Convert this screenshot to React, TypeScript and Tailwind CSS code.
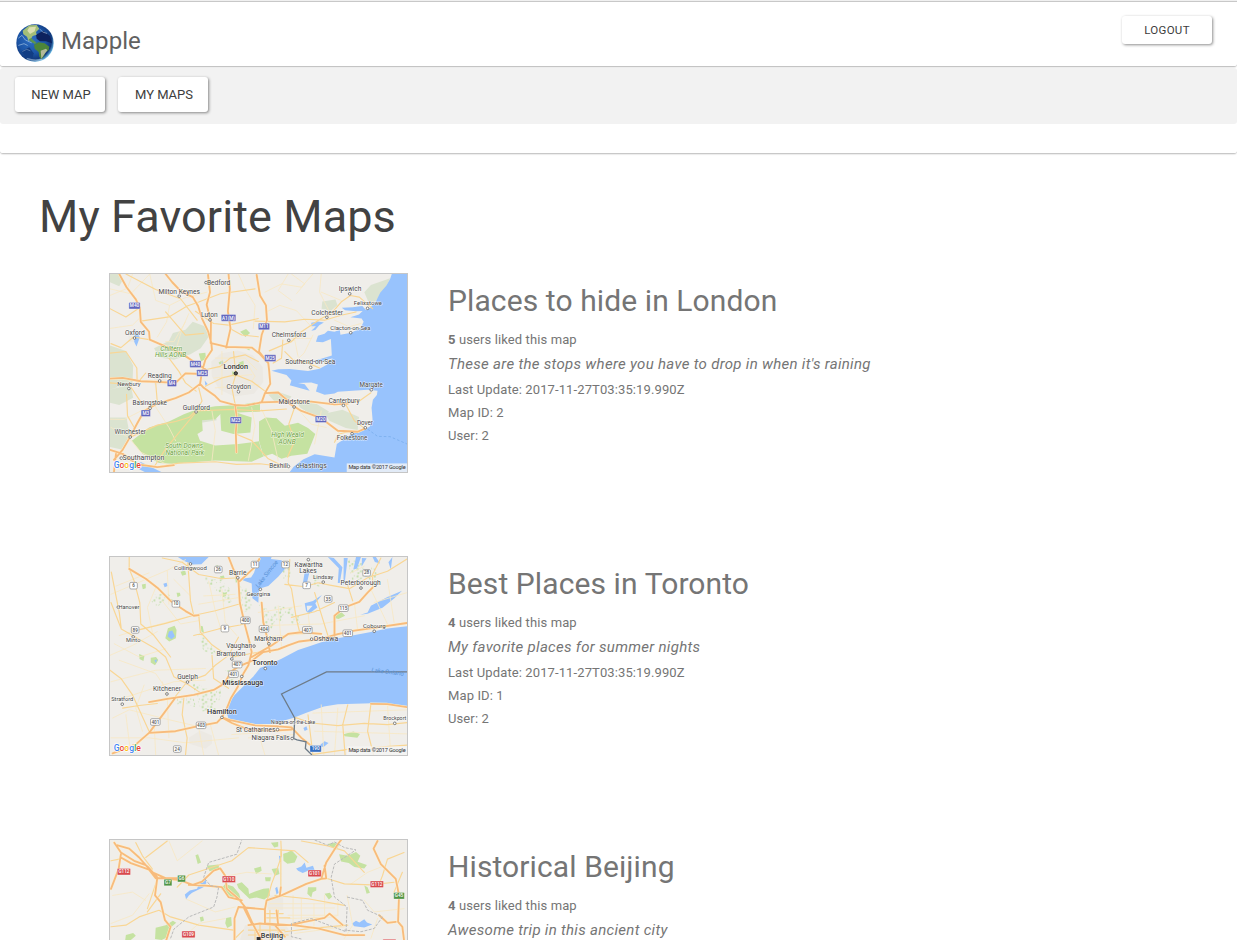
import React from "react";

type Label = [x: number, y: number, text: string, size?: number, color?: string];
type Dot = [x: number, y: number];
type Shield = [x: number, y: number, text: string, fill: string, w?: number];

interface MapArt {
  viewBox: string;
  water: string[];
  parks: string[];
  woods: string[];
  speckledWoods?: boolean;
  towns?: string[];
  motorways: string[];
  major: string[];
  minor: string[];
  borders: { d: string; dash?: string; color: string; width: number }[];
  shields: Shield[];
  dots: Dot[];
  labels: Label[];
  credit?: [number, number];
}

const BLUE = "#6065bd";
const WHITE = "#ffffff";
const RED = "#d8494e";
const GREEN = "#4f9445";

const london: MapArt = {
  viewBox: "12 15 897 600",
  water: [
    "M863 15L858 30L847 50L828 72L815 98L797 118L785 124L774 112L745 116L712 117L722 125L755 128L775 127L764 138L738 146L772 150L778 160L768 180L740 193L708 199L706 184L690 190L670 187L660 196L640 202L634 220L655 222L679 212L682 262L650 272L620 280L640 283L685 270L667 290L645 302L610 309L555 303L520 304L500 308L545 321L560 338L555 352L590 362L615 369L600 349L580 345L620 344L640 350L634 371L660 381L690 377L700 372L790 366L820 369L818 382L806 396L802 420L805 456L796 478L775 488L742 500L697 530L690 571L630 561L595 577L566 600L555 615H909V15Z",
    "M620 163l20-4 18 3-14 8-12 15-12 2 14-14-14 0z",
    "M75 591l30-6 42 20 20 10h-50l-20-10z",
    "M88 185l14 22-10 28-7-15z M298 338l9 10-7 5z M348 278l9 11-8 5z",
  ],
  parks: [
    "M78 520L130 480L190 462L235 440L275 425L330 416L400 412L465 402V432L400 435L345 440L330 455L290 458L292 490L276 500L284 520L330 535L400 530L462 522L468 545L475 568L440 584L330 580L200 590L160 588L110 560Z",
    "M345 440L380 430L440 450L436 495L385 500L348 490Z",
    "M462 462L482 450L515 452L540 475L580 466L610 482L632 500L620 530L608 560L560 566L530 575L502 560L476 568L462 520Z",
    "M875 615L890 570L909 557V615Z",
    "M280 256l20-2 2 18-15 8z M405 190l18-8 12 12-14 12z M400 284l15-6 2 18-15 2z M380 310l16 4-4 12-10-2z",
    "M420 240l15-3-2 10z M340 283l12-7 3 8-12 5z",
  ],
  woods: [
    "M12 15H42L50 34L40 52L12 40Z",
    "M145 240L190 218L202 194L240 184L262 160L300 174L310 205L286 240L255 258L205 275L160 268Z",
    "M12 232L60 248L82 292L80 345L12 365Z M12 365L75 350L82 390L40 412L12 405Z",
    "M653 98l40-6 6 18-20 16-28-6z",
    "M780 70L800 48L858 28L845 58L825 84L812 100L792 98Z",
    "M662 438l52-12 50 22-4 40-36-6-50-22z",
    "M575 402l60 6 38 24-12 24-46-18-28-18z M490 380l30-8 40 14-10 12-40 4z",
    "M12 450h50l10 55-25 42-35-8z M260 455l70-22 4 25-46 8z",
  ],
  towns: ["M318 280l30-25 50-8 45 14 30 36 2 45-28 36-60 8-46-22-22-40z", "M145 326h35v24h-35z M68 192h28v28h-28z"],
  motorways: [
    "M40 15L62 55L90 92L102 118L105 160L130 190L132 214L165 228L225 254L270 284L302 305",
    "M180 15L200 40L225 66L262 85L278 112L290 150L308 188L318 224L320 245L300 275L290 310L284 348L295 360L330 385L345 400L390 412L420 414L470 404L480 376L496 348L493 310L490 285L462 255L440 238L365 236L320 225",
    "M308 18L314 70L304 108L317 160L316 224 M370 15L374 60L368 128L376 180L363 238",
    "M455 18L465 80L483 110L486 155L470 200L462 250L490 285",
    "M12 332L50 330L105 340L155 342L210 345L240 316L290 318",
    "M284 348L250 374L210 391L150 410L115 430L94 468L72 510L50 548L24 578",
    "M390 412L395 450L392 496L394 555 M465 404L545 402L590 430L650 452L700 490L760 493L785 482",
    "M480 376L520 374L550 400L620 402L690 410L730 408",
    "M12 548L50 560L95 592L155 600L205 594 M30 560L24 615",
  ],
  major: [
    "M493 248L530 232L560 220L590 190L650 150L680 135L710 100L738 80L765 85L805 120",
    "M450 158L540 160L600 152L660 155L710 140L755 130",
    "M12 120L60 145L100 118 M105 158L190 145L245 112L280 100L345 75L450 60 M15 226L45 238L83 206L130 214 M12 255L60 250L93 300L94 345",
    "M180 130L240 200L295 195 M60 15L150 62L225 90L275 155 M190 270L220 310L240 345L272 370 M270 128L325 165L370 170L460 150",
    "M540 250L565 275L610 285L645 300 M505 285L530 270L534 215 M374 180L410 200L460 205",
    "M300 305L345 295L375 270L420 260L460 280 M300 355L350 330L390 320L440 340L480 370 M385 250L392 320L380 360L390 410",
    "M72 510L105 495L155 473L210 462L250 450L275 425L290 400L280 360 M272 430L320 428L385 425L462 430L545 424",
    "M155 600L220 588L330 584L394 592L465 590L545 600 M145 600L180 545L225 490L275 430 M392 500L440 520L490 575L540 600",
    "M570 418L552 470L570 520L548 570 M710 408L765 400L800 375 M725 412L750 460L780 482 M690 525L705 500L740 490",
    "M62 380L65 445L85 480 M12 345L70 350L110 410 M95 345L120 315 M155 405L150 345",
  ],
  minor: [
    "M12 60L75 75L132 15 M12 180L80 170L105 145 M80 15L65 58L12 80 M132 15L150 95L192 110L236 88L305 70 M192 110L183 160L155 206 M240 160L205 220L180 220 M250 135L230 180L205 265 M400 15L420 60L450 110L445 180",
    "M480 70L530 45L590 55L625 15 M484 130L525 110L575 126L625 180 M550 15L520 65L560 95 M650 15L645 70L680 140 M650 70L710 95 M560 15L600 45L575 75",
    "M545 220L570 215L580 265 M560 210L620 210 M690 155L735 175L770 165 M625 200L598 255L560 290",
    "M330 270L420 270L455 305 M320 300L430 292L450 325L425 365 M350 250L350 380 M325 330L440 320 M330 360L460 350",
    "M12 455L55 456L115 425 M15 480L68 510L105 555L190 595 M145 410L190 480L210 520 M320 430L330 490L320 580 M440 420L450 475L430 580 M470 425L500 490L520 580 M580 425L620 470L665 480 M650 430L630 530 M705 490L690 520",
  ],
  borders: [{ d: "M790 485L820 507L858 508L909 530", dash: "8 6", color: "#72a9e8", width: 2 }],
  shields: [
    [86, 111, "M40", BLUE, 34], [370, 148, "A1(M)", BLUE, 44], [477, 174, "M11", BLUE, 34],
    [270, 288, "M40", BLUE, 34], [291, 315, "M25", BLUE, 34], [199, 346, "M4", BLUE, 28],
    [496, 270, "M25", BLUE, 34], [120, 437, "M3", BLUE, 28], [392, 458, "M23", BLUE, 34], [649, 455, "M20", BLUE, 34],
  ],
  dots: [[302, 41], [221, 82], [314, 154], [86, 209], [736, 75], [790, 119], [667, 146], [739, 193], [552, 216], [618, 298], [162, 339], [69, 362], [133, 422], [272, 433], [400, 372], [568, 418], [717, 413], [801, 366], [783, 481], [743, 499], [73, 509], [46, 573], [551, 598], [579, 598]],
  labels: [
    [340, 47, "Bedford"], [221, 75, "Milton Keynes", 20], [312, 145, "Luton", 20], [87, 199, "Oxford", 20], [737, 67, "Ipswich", 20], [791, 110, "Felixstowe", 18], [668, 138, "Colchester", 20], [738, 184, "Clacton-on-Sea", 18], [552, 207, "Chelmsford", 20], [617, 289, "Southend-on-Sea", 20],
    [197, 247, "Chiltern", 20, "park"], [195, 268, "Hills AONB", 20, "park"], [392, 304, "London", 22, "city"],
    [162, 330, "Reading", 20], [69, 353, "Newbury", 18], [132, 412, "Basingstoke", 19], [273, 426, "Guildford", 20], [401, 364, "Croydon", 20], [568, 410, "Maidstone", 20], [719, 406, "Canterbury", 19], [801, 358, "Margate", 19], [782, 472, "Dover", 19], [743, 519, "Folkestone", 19], [73, 500, "Winchester", 19], [113, 579, "Southampton", 21],
    [236, 542, "South Downs", 20, "park"], [238, 564, "National Park", 20, "park"], [548, 509, "High Weald", 20, "park"], [547, 531, "AONB", 20, "park"], [521, 604, "Bexhill", 19], [625, 604, "Hastings", 21],
  ],
  credit: [905, 606],
};

const toronto: MapArt = {
  viewBox: "12 12 897 600",
  water: [
    "M217 12L236 24L262 35L288 34L310 12Z",
    "M465 12L455 35L447 60L438 74L403 79L440 92L442 137L460 151L462 108L490 100L520 72L540 48L530 22L498 18L500 12Z",
    "M600 152L625 145L652 127L632 152L638 165L612 185L604 175Z M606 160L608 177L624 160Z",
    "M768 187L790 180L800 160L850 133L894 114L870 138L835 166L790 184Z",
    "M670 12l18 3 26 28-8 48-6 0 3-45z M718 15h12l-8 65-5 18z M755 12l15 0-12 35-11 3z M773 15l14 1-15 25z M805 12l10 0 13 20-16-5z M865 12l-5 38-7-22z M600 58l15-3-8 35-12 20-2-10z",
    "M909 222L850 229L800 239L700 258L650 270L610 284L580 294L530 320L496 336L465 348L445 374L415 404L387 432L370 456L365 485L370 502L405 513L450 518L505 518L535 508L565 500L605 484L658 465L700 458L802 455L850 458L909 464Z",
    "M190 238l10-3 8 17-10 9-12-8z M173 93l10-3 3 10-9 4z M226 45l12-5 2 10-9 4z M596 530l9-5 4 10-9 4z M146 325l8-3-3 12z M648 580l12-10 12 6-15 12-9-2z",
  ],
  parks: [
    "M187 228l20-8 6 13-2 25-20 10-12-10z M213 120l10 0 2 9-9 5z M108 95l12-2 0 14-9 3z M225 57l14-4 3 12-12 4z",
    "M135 317l16-2 7 9-10 16-13-8z M100 306l16 6-3 15-12-6z M717 549l30-8 20 7-8 12-38-5z M690 188l22-8 10 10-20 10-12-3z",
    "M390 70l6-4 4 20-8 4z M330 40l7-4 4 12z M344 70l12-2 2 8-10 3z M352 122l14-4-4 12-10 4z M286 220l6 2 4 20-8-4z",
  ],
  woods: [
    "M300 70l28 10 20-8 12 24-20-8-28 15-12-15z M325 105l40-8 14 18-38 8z M345 130l26-4 9 24-22 5z M148 125l38-4 22 24-30-2-25 22-16-20z",
    "M460 155l28 15 22 35-10 25-24-22z M510 160l50 5 10 28-34-12-4 30-28-10z M556 195l26-8 4 25-24 8z",
    "M274 235l38 36 28 45-46-20z M260 395l26 5 50 75-48 5z M290 410l60 5-10 37-36 2z M240 430l22 3 10 34-28-8z M360 355l25 0 10 38-22 12z M215 440l18 0-3 16-14 3z",
    "M530 20l26 8 2 45-22 4z M780 60l26-22 15 30-15 28z M600 30l20-8 10 14-26 8z M620 65l26 10 4 30-20-8z M730 20l40 0 20 50-45 20z M400 100l30 10 15 60-30 10z",
  ],
  speckledWoods: true,
  towns: ["M250 560l35-22 35 15 0 25-20 15-48-15z"],
  motorways: [
    "M370 12L383 45L400 85L404 150L420 220L432 265L440 300L430 340L415 365L398 405L377 440L363 475L350 498",
    "M70 48L120 78L155 105L195 145L240 176L265 190L280 188",
    "M130 452L185 442L210 438L265 430L325 415L358 395L377 360L400 344L440 327L475 300L520 292L550 280L584 268L650 260L700 246L750 235L820 225L909 212",
    "M210 438L175 485L130 545L90 580L20 607 M130 545L210 540L275 525L335 514L350 498L375 506L450 522L520 525L560 528L590 560L615 580",
    "M440 315L500 280L550 245L590 240L650 245",
    "M690 252L690 190L720 165L765 148L790 120L805 105 M470 150L475 210L490 270L495 300",
    "M350 498L380 515L430 535L505 538L560 535 M404 85L450 42L463 18 M800 457L850 458L909 467",
  ],
  major: [
    "M70 12L70 48L85 85L102 150L105 215L145 250L195 315 M280 188L285 240L320 278L365 310L390 314L430 306L475 298 M265 250L340 230L405 218L430 210",
    "M16 58L30 130L40 180L46 230 M102 232L180 213L260 190L330 175L400 155 M15 150L46 230L150 290L180 315 M265 190L255 145L250 70L247 30",
    "M170 15L230 28L280 65L350 78L400 75 M540 95L600 102L640 90L680 98L735 108L790 75L850 55L909 18 M555 20L550 90L560 108L575 200L585 240",
    "M560 195L630 178L690 150 M630 120L650 185L670 250 M830 15L805 65L805 105 M730 98L745 145",
    "M12 355L45 380L80 430L130 540 M50 470L100 462L155 456 M205 440L245 390L300 370L330 340L370 310L400 255",
    "M180 315L205 375L250 400L280 420 M235 440L230 490L245 560L240 612 M320 310L325 380L370 410",
    "M570 498L620 515L700 523L780 516L850 520L909 514 M610 490L625 612 M800 457L790 540L808 612 M730 460L715 520L722 612 M625 610L730 595L909 582",
  ],
  minor: [
    "M15 125L190 50L240 20 M40 250L90 235L250 192 M30 100L130 60 M150 105L125 165L140 240 M185 55L190 155 M205 80L255 130 M25 275L100 315L180 290 M12 310L80 280L155 238",
    "M170 145L225 215L280 205 M310 85L330 175L350 240 M350 110L360 210L395 250 M295 130L390 125 M280 155L400 135",
    "M40 325L150 365L180 410 M15 390L150 355L300 350 M50 440L205 390L300 385 M20 500L70 475L190 505L275 525 M115 400L90 470L110 540 M170 390L185 440L190 560 M60 490L75 612 M145 510L150 612 M280 530L295 612 M315 520L340 612 M15 560L130 560L240 575L400 560",
    "M460 180L590 160 M465 220L650 215L780 190 M475 255L600 245 M520 160L530 285 M610 180L620 270 M750 150L760 235 M800 110L850 215 M740 60L780 40 M850 80L870 210 M810 150L909 120",
    "M625 485L909 475 M630 540L909 548 M650 460L658 612 M700 470L690 612 M850 458L860 612 M380 550L460 545L480 612 M430 560L570 550",
  ],
  borders: [{ d: "M909 360H666L530 427L570 500L567 562L577 566L604 572L602 592L622 612", color: "#6d7b88", width: 4 }],
  shields: [
    [83, 99, "6", WHITE], [211, 154, "10", WHITE], [339, 50, "26", WHITE], [450, 35, "11", WHITE], [542, 35, "12", WHITE], [606, 98, "7", WHITE], [787, 60, "28", WHITE], [671, 139, "35", WHITE], [717, 167, "115", WHITE, 29], [421, 204, "400", WHITE, 29], [88, 233, "89", WHITE], [359, 229, "9", WHITE], [477, 230, "404", WHITE, 29], [608, 233, "407", WHITE, 29], [730, 243, "401", WHITE, 29], [396, 338, "407", WHITE, 29], [385, 367, "401", WHITE, 29], [149, 512, "401", WHITE, 29], [287, 522, "403", WHITE, 29], [215, 594, "24", WHITE], [633, 593, "190", "#346dc1", 34],
  ],
  dots: [[255, 33], [398, 75], [611, 20], [656, 88], [770, 106], [37, 164], [82, 254], [466, 110], [447, 282], [380, 321], [492, 275], [621, 261], [810, 237], [481, 350], [410, 374], [246, 391], [184, 427], [49, 458], [350, 498], [518, 535], [562, 562], [872, 516]],
  labels: [
    [255, 51, "Collingwood", 18], [398, 66, "Barrie", 20], [612, 42, "Kawartha", 20], [610, 61, "Lakes", 20], [656, 80, "Lindsay", 18], [769, 97, "Peterborough", 20], [69, 170, "Hanover", 17], [82, 269, "Minto", 17], [460, 130, "Georgina", 18], [402, 288, "Vaughan", 20], [377, 311, "Brampton", 20], [490, 266, "Markham", 20], [664, 267, "Oshawa", 21], [810, 228, "Cobourg", 18],
    [480, 340, "Toronto", 22, "city"], [413, 401, "Mississauga", 22, "city"], [246, 382, "Guelph", 20], [184, 417, "Kitchener", 20], [49, 449, "Stratford", 17], [350, 488, "Hamilton", 22, "city"], [452, 542, "St Catharines", 20], [497, 567, "Niagara Falls", 20], [565, 517, "Niagara-on-the-Lake", 15], [872, 507, "Brockport", 16], [850, 366, "Lake Ontario", 18, "water"], [490, 67, "Lake Simcoe", 18, "waterTilt"],
  ],
  credit: [905, 603],
};

const beijing: MapArt = {
  viewBox: "12 12 897 600",
  water: [
    "M238 177L253 165L275 160L282 140L300 126L303 142L294 155L260 172L250 180L242 192Z",
    "M574 98L590 92L600 80L605 96L625 90L630 104L610 105L594 112L580 105Z",
    "M742 266L755 257L765 262L780 252L788 262L804 268L780 277L750 273Z M511 158l6-4 4 18-6 5z M522 60l7 1-4 16z",
  ],
  parks: [
    "M150 278L180 270L202 257L212 263L190 282L188 305L168 315L148 312Z M60 300L82 294L90 302L75 315H58Z",
    "M347 160L360 145L384 153L402 175L408 196L385 190Z M395 145L410 140L430 160L432 176L450 168L475 160L492 158L495 180L478 192L455 186L433 190L423 180L400 158Z",
    "M535 54L548 50L560 43L578 62L570 80L548 84L536 75Z M500 100L520 97L524 115L510 120Z M447 98L468 92L470 105L453 115Z M498 20L520 18L520 32L508 35Z",
    "M704 55L730 60L755 48L768 60L760 78L788 88L780 98L750 94L733 82L710 77Z M610 155L635 155L635 165L624 170L620 186L608 175Z",
    "M270 58l8-3 9 25-10 5z M363 248l15-3 2 26-14 8-6-15z M304 90l35-4 4 13-30 8z M780 150l10 5 7 17-10 3z M660 175l16-3 7 12-10 8z M283 246l10-2 3 12-10 4z M480 125l18 0-2 12-14 0z M668 24l22-4 14 8-10 14z",
  ],
  woods: [],
  towns: ["M420 270L540 265L565 305L540 360L430 360L405 312Z M485 180L535 180L535 225L488 225Z"],
  motorways: [
    "M25 20L45 50L85 75L120 88L140 110L185 130L220 133L262 148L290 138L325 105L345 98L360 120L365 160L400 190L420 215L445 270L470 315",
    "M35 28L70 38L100 65L120 88 M45 55L38 100L15 160 M45 65L75 82L130 102L150 128L220 128",
    "M125 92L155 125L148 180L165 200L178 255L195 275L182 315 M250 148L300 150L350 155L370 185L410 195",
    "M400 215L480 222L485 195L530 180L605 145L650 130L665 80L700 25L710 12 M528 155L525 180 M650 130L665 128L660 90",
    "M820 15L808 38L830 85L875 130L885 180L882 260L895 275L900 315 M825 240L850 263L875 260",
    "M400 215L388 250L388 315 M415 215L440 265 M480 222L480 265L555 270L600 260L660 248L675 235L715 270 M430 270L465 265L515 270L565 270L640 280L720 300L780 300 M515 225L520 270L548 270 M510 270L540 305",
  ],
  major: [
    "M90 20L110 60L140 100 M15 75L40 70 M120 65L185 15 M215 155L250 118L380 75L430 35L570 45L610 80",
    "M15 275L60 270L100 245L160 225L195 245L280 270L385 285 M125 220L150 145 M165 175L125 230",
    "M485 200L500 145L515 105L530 60L528 15 M528 155L528 45 M665 128L720 145L800 148L870 140",
    "M900 50L850 70L835 120L825 145 M895 110L870 170 M510 180L610 190L720 210 M590 15L670 30L720 45L780 110",
    "M430 285H540 M430 300H550 M450 270V330 M465 265V340 M495 225V315 M520 225V315 M480 235H535 M480 248H555 M415 285L385 315 M540 290L620 280L730 270",
  ],
  minor: [
    "M190 15L215 75L290 15 M20 180L80 170L120 195 M15 265L80 240L130 175 M240 190L330 230L390 215 M370 120L425 110L500 115",
    "M495 205H705 M490 218H690 M565 180V265 M590 190V270 M628 205V275 M660 180V250 M700 200V240 M550 240H700 M550 250L695 245",
    "M740 145L790 110L840 90 M728 180L745 270L720 310 M780 195L810 230L900 220 M820 250L800 310 M570 295L720 275 M230 310L280 265L360 250",
  ],
  borders: [
    { d: "M195 310L205 282L250 245L325 215L335 185L340 155L315 150L295 125L310 80L395 55L410 12", dash: "9 4", color: "#b9b9b9", width: 3 },
    { d: "M630 12L670 28L690 18L720 35L755 42L690 85L680 125L690 185L728 215L725 290L620 250L560 265L560 305L590 312", dash: "9 4", color: "#b9b9b9", width: 3 },
    { d: "M728 185L775 195L790 225L835 245L810 280L770 290L720 285", dash: "9 4", color: "#b9b9b9", width: 3 },
  ],
  shields: [[54, 108, "G112", RED, 40], [187, 141, "G7", GREEN, 24], [228, 129, "G6", GREEN, 24], [371, 131, "G110", RED, 40], [630, 113, "G101", RED, 40], [818, 146, "G112", RED, 40], [885, 181, "G45", GREEN, 32], [249, 298, "G109", RED, 40], [856, 323, "", RED, 40]],
  dots: [],
  labels: [[501, 308, "Beijing", 22, "city"]],
};

const labelStyle = (kind?: string) => {
  if (kind === "park") return { fill: "#689f38", fontStyle: "italic" as const, fontWeight: 400 };
  if (kind === "city") return { fill: "#333333", fontStyle: "normal" as const, fontWeight: 500 };
  if (kind && kind.startsWith("water")) return { fill: "#5790d4", fontStyle: "italic" as const, fontWeight: 400 };
  return { fill: "#484848", fontStyle: "normal" as const, fontWeight: 400 };
};

const Strokes = ({ paths, color, width }: { paths: string[]; color: string; width: number }) => (
  <path d={paths.join(" ")} fill="none" stroke={color} strokeWidth={width} strokeLinejoin="round" strokeLinecap="round" />
);

function GoogleMark({ y }: { y: number }) {
  return (
    <text x="23" y={y} fontSize="26" fontWeight="500" stroke="#fff" strokeWidth="4" paintOrder="stroke">
      <tspan fill="#4285f4">G</tspan>
      <tspan fill="#ea4335">o</tspan>
      <tspan fill="#fbbc05">o</tspan>
      <tspan fill="#4285f4">g</tspan>
      <tspan fill="#34a853">l</tspan>
      <tspan fill="#ea4335">e</tspan>
    </text>
  );
}

function StaticMap({ art }: { art: MapArt }) {
  return (
    <svg viewBox={art.viewBox} preserveAspectRatio="none" className="block h-full w-full font-[Roboto,sans-serif]">
      <defs>
        <pattern id="speckle" width="26" height="22" patternUnits="userSpaceOnUse">
          <path d="M2 3l6-2 1 6-5 2z M14 8l5 1-1 7-5-2z M5 15l6-1-1 5-4 1z M20 1l4 1-2 4z" fill="#c3dfab" />
        </pattern>
      </defs>
      <rect width="930" height="640" fill="#f0eeea" />
      <g fill={art.speckledWoods ? "url(#speckle)" : "#dbe3d0"}>{art.woods.map((d, i) => <path key={i} d={d} />)}</g>
      <g fill="#ece9e3">{art.towns?.map((d, i) => <path key={i} d={d} />)}</g>
      <g fill="#c5e2a1">{art.parks.map((d, i) => <path key={i} d={d} />)}</g>
      <g fill="#98c3fd" fillRule="evenodd">{art.water.map((d, i) => <path key={i} d={d} />)}</g>
      <Strokes paths={art.minor} color="#f8e8c4" width={2.5} />
      <Strokes paths={art.major} color="#f9d694" width={3.5} />
      <Strokes paths={art.motorways} color="#fff0cc" width={8} />
      <Strokes paths={art.motorways} color="#f7bb7d" width={5.5} />
      {art.borders.map((b, i) => (
        <path key={i} d={b.d} fill="none" stroke={b.color} strokeWidth={b.width} strokeDasharray={b.dash} />
      ))}
      {art.shields.map(([x, y, text, fill, w = 23], i) => {
        const plain = fill === WHITE;
        return (
          <g key={i}>
            <rect x={x - w / 2} y={y - 10} width={w} height={20} rx={plain ? 4 : 2} fill={fill} stroke={plain ? "#9a9a9a" : "#ffffff"} strokeWidth={plain ? 2.5 : 1} />
            <text x={x} y={y + 5} textAnchor="middle" fontSize="14" fontWeight="500" fill={plain ? "#555555" : "#ffffff"}>{text}</text>
          </g>
        );
      })}
      {art.dots.map(([x, y], i) => (
        <circle key={i} cx={x} cy={y} r="4" fill="#ffffff" stroke="#666666" strokeWidth="2.5" />
      ))}
      {art === london && <circle cx="392" cy="316" r="5" fill="#555" stroke="#222" strokeWidth="3" />}
      {art === beijing && <rect x="455" y="306" width="12" height="12" fill="#333" />}
      {art.labels.map(([x, y, text, size = 20, kind], i) => (
        <text
          key={i}
          x={x}
          y={y}
          textAnchor="middle"
          fontSize={size}
          stroke={kind?.startsWith("water") ? "none" : "#ffffff"}
          strokeOpacity="0.75"
          strokeWidth="3"
          paintOrder="stroke"
          transform={kind === "waterTilt" ? `rotate(-52 ${x} ${y})` : kind === "water" ? `rotate(7 ${x} ${y})` : undefined}
          {...labelStyle(kind)}
        >
          {text}
        </text>
      ))}
      {art.credit && (
        <g>
          <rect x="727" y={art.credit[1] - 17} width="182" height="26" fill="#f5f5f5" fillOpacity="0.8" />
          <text x={art.credit[0]} y={art.credit[1]} textAnchor="end" fontSize="17" fill="#333" textLength="173">Map data ©2017 Google</text>
          <GoogleMark y={art.credit[1] - 3} />
        </g>
      )}
    </svg>
  );
}

function Globe() {
  return (
    <svg viewBox="0 0 114 114" className="block h-[38px] w-[38px]">
      <defs>
        <radialGradient id="ocean" cx="0.42" cy="0.42" r="0.6">
          <stop offset="0" stopColor="#2f6fc4" />
          <stop offset="0.6" stopColor="#1c55a6" />
          <stop offset="0.86" stopColor="#12397c" />
          <stop offset="1" stopColor="#6cbce6" />
        </radialGradient>
        <clipPath id="disc"><circle cx="57" cy="57" r="56" /></clipPath>
      </defs>
      <g clipPath="url(#disc)">
        <rect width="114" height="114" fill="url(#ocean)" />
        <path d="M60 32L82 20L102 36L108 58L90 52L72 52L62 44Z" fill="#0d225e" />
        <path d="M16 82L40 70L53 88L50 102L28 98Z" fill="#123d83" />
        <path d="M20 20L40 4L62 3L70 14L60 24L62 32L50 36L44 46L38 52L33 38L22 31Z" fill="#a3be78" />
        <path d="M40 10L60 8L56 22L42 30L34 20Z" fill="#dbdfb0" />
        <path d="M38 46L46 42L54 50L62 56L56 60L46 54Z" fill="#5b9550" />
        <path d="M54 62L68 55L86 58L100 68L98 78L88 86L84 96L76 106L70 98L68 84L56 74Z" fill="#4d853a" />
        <path d="M74 80L90 74L94 79L84 92L76 104Z" fill="#b3b99a" />
        <g fill="none" stroke="#cfe7f7" strokeLinecap="round" strokeOpacity="0.5">
          <path d="M8 42L18 34L28 48L46 56" strokeWidth="3" />
          <path d="M8 64L24 59L34 64" strokeWidth="3" />
          <path d="M34 104Q56 112 78 106" strokeWidth="4" />
          <path d="M72 16L80 24L92 28" strokeWidth="3" />
          <path d="M20 82L32 76L42 80" strokeWidth="2" />
        </g>
      </g>
    </svg>
  );
}

const raised = "bg-white text-[#3d3d3d] rounded-[3px] shadow-[1px_1px_3px_rgba(0,0,0,0.45)] uppercase whitespace-nowrap flex items-center justify-center";

interface Entry {
  title: string;
  likes: number;
  note: string;
  id: number;
  art: MapArt;
}

const entries: Entry[] = [
  { title: "Places to hide in London", likes: 5, note: "These are the stops where you have to drop in when it's raining", id: 2, art: london },
  { title: "Best Places in Toronto", likes: 4, note: "My favorite places for summer nights", id: 1, art: toronto },
  { title: "Historical Beijing", likes: 4, note: "Awesome trip in this ancient city", id: 3, art: beijing },
];

function FavoriteMap({ entry }: { entry: Entry }) {
  return (
    <article className="flex h-[283px] items-start gap-10">
      <div className="h-[200px] w-[299px] shrink-0 border border-[#c6c6c6]">
        <StaticMap art={entry.art} />
      </div>
      <div className="pt-2.5 text-[13px] leading-[23px] tracking-[0.11px] text-[#757575]">
        <h2 className="text-[30px] leading-9 tracking-[0.1px]">{entry.title}</h2>
        <p className="mt-[9px] leading-6"><b className="font-bold">{entry.likes}</b> users liked this map</p>
        <p className="mb-0.5 text-[15px] leading-6 tracking-[0.3px] italic">{entry.note}</p>
        <p>Last Update: 2017-11-27T03:35:19.990Z</p>
        <p>Map ID: {entry.id}</p>
        <p>User: 2</p>
      </div>
    </article>
  );
}

export default function App() {
  return (
    <div className="h-[940px] overflow-hidden bg-white font-[Roboto,sans-serif]">
      <div className="h-0.5 border-b border-[#c8c8c8] bg-[#f0f0f0]" />
      <div className="h-[152px] rounded-b-[3px] border-b border-[#c8c8c8] shadow-[0_1px_1px_rgba(0,0,0,0.08)]">
        <header className="flex h-[65px] items-start justify-between rounded-[3px] border-b border-[#c4c4c4] pr-[25px] pl-4 shadow-[0_1px_1px_rgba(0,0,0,0.08)]">
          <div className="flex items-center gap-[7px] pt-[22px]">
            <Globe />
            <span className="-mt-1 text-[24px] leading-8 tracking-[0.05px] text-[#616161]">Mapple</span>
          </div>
          <button className={`${raised} mt-3.5 h-7 w-[90px] pt-px text-[11.5px] tracking-[0.3px]`}>Logout</button>
        </header>
        <nav className="mt-px flex h-14 gap-[13px] rounded-[3px] bg-[#f2f2f2] px-[15px] pt-[9px]">
          <button className={`${raised} h-[35px] w-[90px] pl-0.5 text-[13px]`}>New Map</button>
          <button className={`${raised} h-[35px] w-[90px] pl-0.5 text-[13px]`}>My Maps</button>
        </nav>
      </div>
      <main>
        <h1 className="mt-[38px] ml-[39px] h-[81px] text-[45px] leading-[50px] tracking-[0.1px] text-[#424242]">My Favorite Maps</h1>
        <div className="ml-[109px]">
          {entries.map((entry) => <FavoriteMap key={entry.title} entry={entry} />)}
        </div>
      </main>
    </div>
  );
}
